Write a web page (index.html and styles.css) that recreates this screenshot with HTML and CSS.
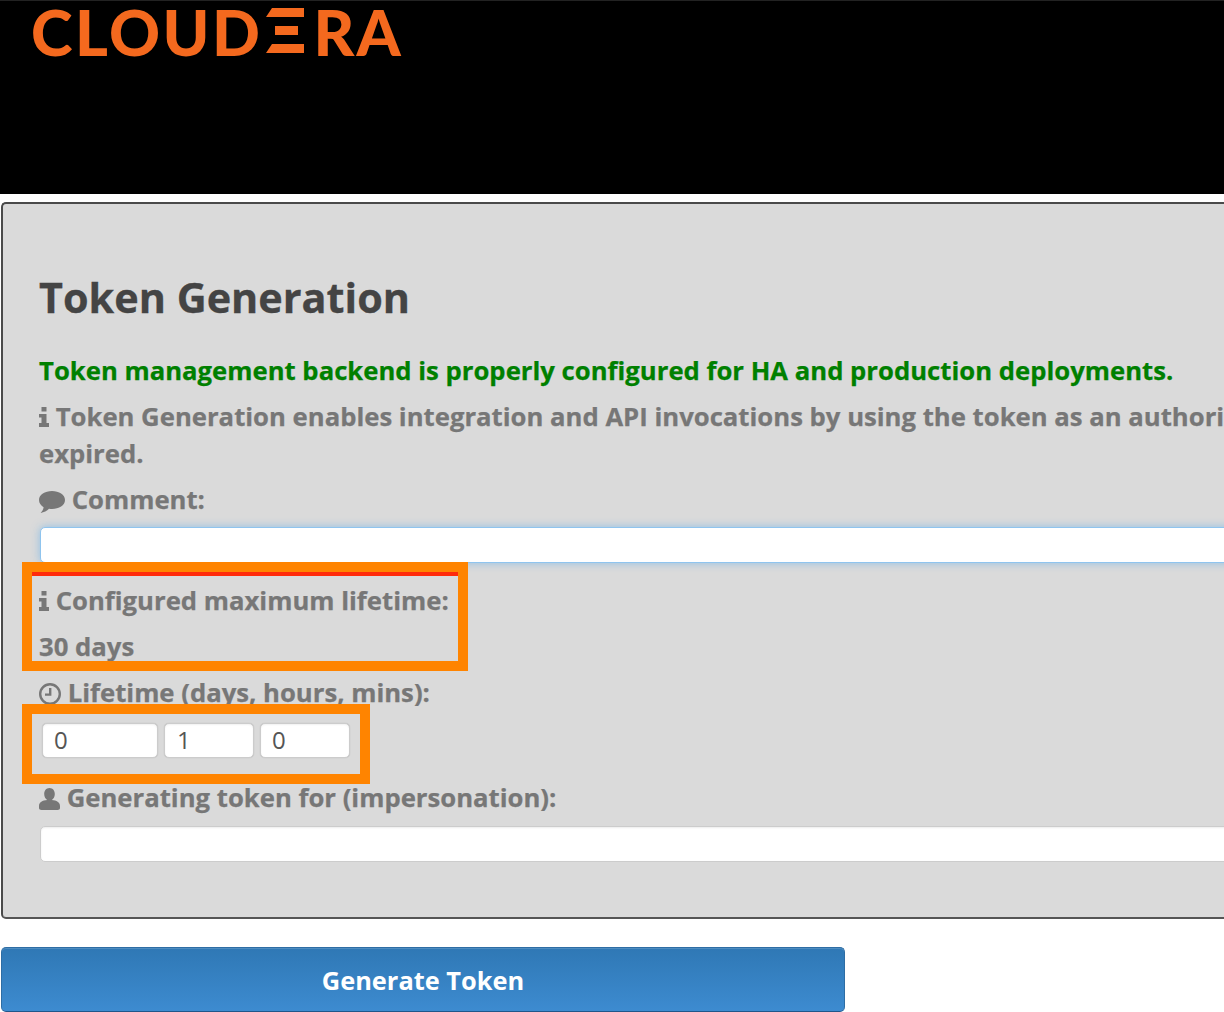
FILE: index.html
```html
<!DOCTYPE html>
<html lang="en">
<head>
<meta charset="utf-8">
<title>Token Generation</title>
<link rel="stylesheet" href="styles.css">
</head>
<body>
<div class="page">
  <header class="topbar">
    <div class="logo"><span class="logo-a">CLOUD</span><svg class="logo-e" viewBox="0 0 38 45" aria-hidden="true"><path d="M6 0H38V9H0ZM9 18H32V27H9ZM6 36H38V45H0Z"/></svg><span class="logo-b">RA</span></div>
  </header>
  <main class="panel">
    <h1 class="title">Token Generation</h1>
    <p class="row status">Token management backend is properly configured for HA and production deployments.</p>
    <p class="row info"><svg class="icon icon-i" viewBox="0 0 10 20" aria-hidden="true"><path d="M2.500 0H7.500V4.500H2.500ZM0 7H7.500V16H10V20H0V16H2.500V10.500H0Z"/></svg> Token Generation enables integration and API invocations by using the token as an authorization credential until it has<br>expired.</p>
    <label class="row label gap-sm"><svg class="icon icon-comment" viewBox="0 0 26 22" aria-hidden="true"><path d="M13 0C20 0 26 3.600 26 9C26 14.300 20 18 13 18C12 18 11 18 10 17.800C8 19.800 5 21.500 1.500 22C3.500 20 4.500 18 4.600 16.200C1.800 14.500 0 12 0 9C0 3.600 6 0 13 0Z"/></svg> Comment:</label>
    <input class="field field-focus" type="text">
    <p class="row label gap-lg"><svg class="icon icon-i" viewBox="0 0 10 20" aria-hidden="true"><path d="M2.500 0H7.500V4.500H2.500ZM0 7H7.500V16H10V20H0V16H2.500V10.500H0Z"/></svg> Configured maximum lifetime:</p>
    <p class="row label gap-sm">30 days</p>
    <label class="row label gap-sm"><svg class="icon icon-clock" viewBox="0 0 22 22" aria-hidden="true"><circle cx="11" cy="11" r="9.800" fill="none" stroke="currentColor" stroke-width="2.400"/><path d="M10 5H12.400V12.700H6V10.500H10Z"/></svg> Lifetime (days, hours, mins):</label>
    <div class="duration">
      <input class="num num-days" type="text" value="0">
      <input class="num num-hours" type="text" value="1">
      <input class="num num-mins" type="text" value="0">
    </div>
    <label class="row label gap-xl"><svg class="icon icon-user" viewBox="0 0 21 22" aria-hidden="true"><path d="M10.500 0C14 0 15.800 2.800 15.800 6C15.800 9 14.400 11 12.800 12C17.500 12.500 21 14 21 18V20C21 21.200 20 22 18.500 22H2.500C1 22 0 21.200 0 20V18C0 14 3.500 12.500 8.200 12C6.600 11 5.200 9 5.200 6C5.200 2.800 7 0 10.500 0Z"/></svg> Generating token for (impersonation):</label>
    <input class="field field-last" type="text">
  </main>
  <button class="generate" type="button">Generate Token</button>
  <div class="callout callout-max"><span class="callout-line"></span></div>
  <div class="callout callout-life"></div>
</div>
</body>
</html>
```
FILE: styles.css
```css
* { box-sizing: border-box; }
html, body { margin: 0; padding: 0; background: #fff; }
body { width: 1224px; height: 1012px; overflow: hidden; font-family: "Open Sans", sans-serif; }
.page { position: relative; width: 1224px; height: 1012px; overflow: hidden; }

.topbar { height: 194px; background: #000; border-top: 1px solid #222; }
.logo {
  display: flex; align-items: flex-start; padding-left: 31px;
  font-family: Lato, sans-serif; font-weight: 900; font-size: 63px; line-height: 61px;
  color: #f4691e;
}
.logo-a { letter-spacing: 2.500px; }
.logo-b { letter-spacing: 2px; }
.logo-e { width: 38px; height: 45px; margin: 7px 10px 0 3px; fill: #f4691e; flex: none; }

.panel {
  width: 1400px; height: 717px; margin: 8px 0 0 1px; padding: 67px 38px 0 36px;
  background: #dadada; border: 2px solid #4a4a4a; border-right: 0; border-radius: 5px;
  border-bottom-color: #555;
}
.title { margin: 0 0 29px; font-size: 41.400px; line-height: 52px; font-weight: 700; color: #444; -webkit-text-stroke: .3px #444; }
.row { display: block; margin: 0; font-size: 25.700px; line-height: 37px; font-weight: 700; color: #777; white-space: nowrap; -webkit-text-stroke: .25px currentColor; }
.status { color: #008000; }
.info { margin-top: 9px; }
.gap-sm { margin-top: 9px; }
.gap-lg { margin-top: 19px; }
.gap-xl { margin-top: 21px; }
.icon { display: inline-block; fill: currentColor; color: #777; vertical-align: -1px; }
.icon-i { width: 10px; height: 20px; }
.icon-comment { width: 26px; height: 22px; vertical-align: -4px; }
.icon-clock { width: 22px; height: 22px; vertical-align: -3px; }
.icon-user { width: 21px; height: 22px; vertical-align: -3px; }

.field {
  display: block; width: 1300px; height: 36px; margin: 9px 0 0 1px; padding: 0 10px;
  background: #fff; border: 1px solid #ccc; border-radius: 5px; outline: 0;
  box-shadow: inset 0 1px 2px rgba(0,0,0,.08);
}
.field-focus { border-color: #8fc4ee; box-shadow: 0 0 8px rgba(82,168,236,.55); }
.field-last { margin-top: 10px; }

.duration { display: flex; gap: 6px; margin: 12px 0 0 3px; height: 35px; }
.num {
  height: 35px; padding: 0 11px 2px; background: #fff; border: 1px solid #ccc; border-radius: 5px;
  font-family: "Open Sans", sans-serif; font-size: 24px; color: #555; outline: 0;
  box-shadow: inset 0 1px 2px rgba(0,0,0,.06), 0 0 1px rgba(0,0,0,.2);
}
.num-days { width: 116px; }
.num-hours { width: 90px; padding-left: 12px; }
.num-mins { width: 90px; }

.generate {
  display: block; width: 844px; height: 65px; margin: 28px 0 0 1px; padding: 0;
  background: linear-gradient(#2f78b5, #3d8bd0); border: 1px solid #2e6da4; border-bottom-color: #20568a;
  border-radius: 5px; color: #fff; font-family: "Open Sans", sans-serif; font-size: 25.400px; font-weight: 700;
  box-shadow: inset 0 1px 0 rgba(255,255,255,.15);
}

.callout { position: absolute; border: 10px solid #ff8400; }
.callout-max { left: 22px; top: 562px; width: 446px; height: 109px; }
.callout-life { left: 22px; top: 704px; width: 348px; height: 80px; }
.callout-line { display: block; height: 4px; background: #ff2a0a; }
```
